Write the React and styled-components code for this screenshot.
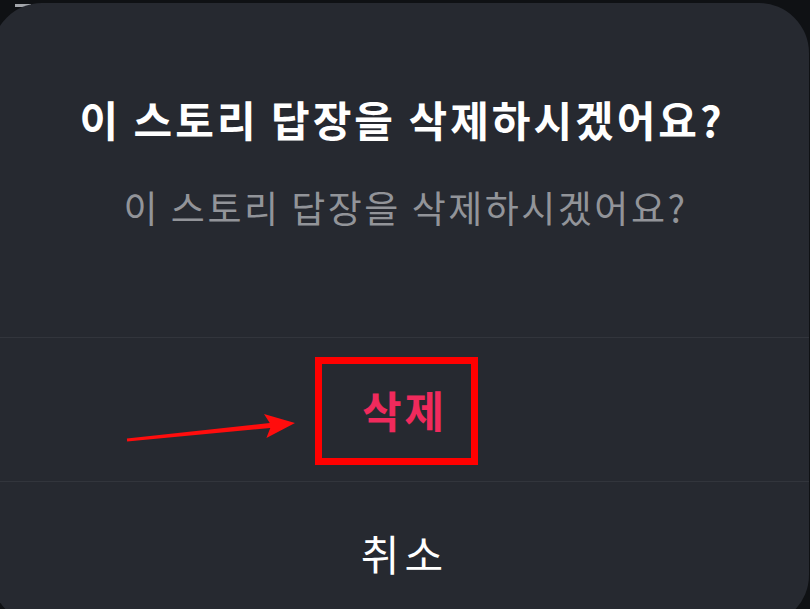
import React from "react";
import styled, { createGlobalStyle } from "styled-components";

const GlobalStyle = createGlobalStyle`
  html, body {
    margin: 0;
    padding: 0;
    background: #0f1114;
    overflow: hidden;
  }
  * {
    box-sizing: border-box;
  }
`;

const App = () => {
  return (
    <>
      <GlobalStyle />
      <Screen>
        <StatusTick />
        <Sheet>
          <Header>
            <Title>이 스토리 답장을 삭제하시겠어요?</Title>
            <Message>이 스토리 답장을 삭제하시겠어요?</Message>
          </Header>
          <ActionRow>
            <ActionLabel danger>삭제</ActionLabel>
          </ActionRow>
          <ActionRow>
            <ActionLabel>취소</ActionLabel>
          </ActionRow>
        </Sheet>

        {/* annotation drawn over the screenshot */}
        <HighlightBox />
        <Arrow viewBox="0 0 185 45" width="185" height="45">
          <polygon
            points="7.15,36.5 150.25,23.0 146.4,32.9 175,18 144.0,9.1 149.75,18.0 6.85,33.5"
            fill="#ff0d0d"
          />
        </Arrow>
      </Screen>
    </>
  );
};

export default App;

const Screen = styled.div`
  position: relative;
  width: 810px;
  height: 609px;
  padding-top: 3px;
  overflow: hidden;
  background: #0f1114;
  font-family: "Noto Sans CJK KR", "Noto Sans", sans-serif;
`;

const StatusTick = styled.div`
  position: absolute;
  left: 15px;
  top: 4px;
  width: 16px;
  height: 3px;
  background: #a3a6ab;
`;

const Sheet = styled.div`
  position: relative;
  margin-left: -8px;
  width: 817px;
  height: 622px;
  border-radius: 50px;
  background: #262930;
  display: flex;
  flex-direction: column;
`;

const Header = styled.div`
  height: 335px;
  display: flex;
  flex-direction: column;
  align-items: center;
  padding-top: 91px;
  gap: 38px;
`;

const Title = styled.h1`
  margin: 0;
  padding-left: 3px;
  font-size: 42px;
  line-height: 50px;
  font-weight: 700;
  color: #ffffff;
  letter-spacing: 3px;
`;

const Message = styled.p`
  margin: 0;
  padding-left: 10px;
  font-size: 37px;
  line-height: 50px;
  font-weight: 400;
  color: #929499;
  letter-spacing: 2.5px;
`;

const ActionRow = styled.div`
  height: 145px;
  border-top: 1px solid #32353c;
  display: flex;
  align-items: center;
  justify-content: center;
  padding-left: 8px;
`;

const ActionLabel = styled.span`
  font-size: ${(props) => (props.danger ? "43px" : "42px")};
  line-height: 50px;
  font-weight: ${(props) => (props.danger ? 700 : 400)};
  letter-spacing: ${(props) => (props.danger ? "3px" : "5px")};
  color: ${(props) => (props.danger ? "#f02a5c" : "#ffffff")};
`;

const HighlightBox = styled.div`
  position: absolute;
  left: 315px;
  top: 357px;
  width: 163px;
  height: 108px;
  border: 7px solid #ff0000;
`;

const Arrow = styled.svg`
  position: absolute;
  left: 120px;
  top: 405px;
`;
